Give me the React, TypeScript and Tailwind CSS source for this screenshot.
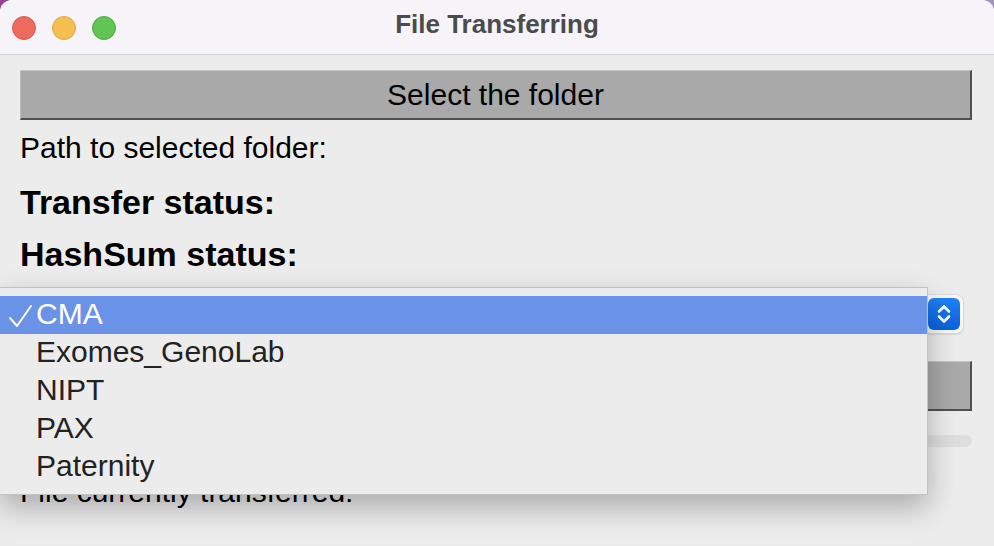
const groups = ["CMA", "Exomes_GenoLab", "NIPT", "PAX", "Paternity"]

function Light({ color, edge }: { color: string; edge: string }) {
  return <div className={`h-[24px] w-[24px] rounded-full border ${color} ${edge}`} />
}

export default function App() {
  const selected = "CMA"

  return (
    <div
      className="relative h-[546px] w-[994px] overflow-hidden bg-gradient-to-r from-[#97458f] to-[#a496bb]"
      style={{ fontFamily: '"Liberation Sans", Arial, sans-serif' }}
    >
      <div className="flex h-full flex-col overflow-hidden rounded-t-[12px] bg-[#ececec]">
        {/* Title bar */}
        <div className="grid h-[55px] shrink-0 grid-cols-[1fr_auto_1fr] items-center border-b border-[#d2d2d2] bg-[#f6f4f8]">
          <div className="flex items-center gap-[16px] pl-[12px] pt-[1px]">
            <Light color="bg-[#ee6a5f]" edge="border-[#d65a50]" />
            <Light color="bg-[#f5bf4f]" edge="border-[#d9a740]" />
            <Light color="bg-[#61c554]" edge="border-[#50a845]" />
          </div>
          <div className="pb-[6px] text-[26px] font-bold text-[#4b4b4b]">File Transferring</div>
          <div />
        </div>

        {/* Content */}
        <div className="flex flex-col pl-5 pr-[22px] pt-[15px] text-black">
          <button className="h-[50px] w-full border-l border-t border-b-2 border-r-2 border-l-[#bdbdbd] border-t-[#c6c6c6] border-b-[#505050] border-r-[#505050] bg-[#a9a9a9] text-[30px] leading-none text-black">
            Select the folder
          </button>

          <div className="mt-[11px] text-[30px] leading-[34px]">Path to selected folder:</div>
          <div className="mt-[18px] text-[34px] font-bold leading-[38px]">Transfer status:</div>
          <div className="mt-[14px] text-[34px] font-bold leading-[38px]">HashSum status:</div>

          {/* Popup button (under the open menu) */}
          <div className="mr-[8px] mt-[21px] flex h-[40px] items-center justify-end rounded-[8px] border border-[#dadada] bg-[#f7f7f7] pr-[3px] shadow-[0_1px_1px_rgba(0,0,0,0.08)]">
            <div className="flex h-[32px] w-[32px] items-center justify-center rounded-[6px] bg-gradient-to-b from-[#1f80f5] to-[#0a62dd]">
              <svg width="20" height="24" viewBox="0 0 20 24" fill="none" stroke="white" strokeWidth="2.6" strokeLinecap="round" strokeLinejoin="round">
                <path d="M5 9.5 10 4.5 15 9.5" />
                <path d="M5 14.5 10 19.5 15 14.5" />
              </svg>
            </div>
          </div>

          <button className="mt-[27px] h-[50px] w-full border-l border-t border-b-2 border-r-2 border-l-[#bdbdbd] border-t-[#c6c6c6] border-b-[#505050] border-r-[#505050] bg-[#a9a9a9] text-[30px] leading-none text-black">
            Start transfer
          </button>

          <div className="mt-[24px] h-[12px] w-full rounded-full bg-[#dedede]" />

          <div className="mt-[28px] text-[30px] leading-[34px]">File currently transferred:</div>
        </div>
      </div>

      {/* Open popup menu */}
      <div className="absolute left-0 top-[287px] w-[928px] border border-l-0 border-[#c2c2c2] bg-[#ececec] pb-[8px] pt-[8px] shadow-[0_12px_28px_rgba(0,0,0,0.28)]">
        {groups.map((g) => {
          const active = g === selected
          return (
            <div
              key={g}
              className={`flex h-[38px] items-center text-[30px] ${active ? "bg-[#6a93e8] text-white" : "text-[#222]"}`}
            >
              <div className="flex w-[36px] items-center justify-center pl-[4px]">
                {active && (
                  <svg width="26" height="26" viewBox="0 0 26 26" fill="none" stroke="white" strokeWidth="2" strokeLinecap="round" strokeLinejoin="round">
                    <path d="M3 16 10 24 24 4" />
                  </svg>
                )}
              </div>
              <span className="-mt-[3px]">{g}</span>
            </div>
          )
        })}
      </div>
    </div>
  )
}
